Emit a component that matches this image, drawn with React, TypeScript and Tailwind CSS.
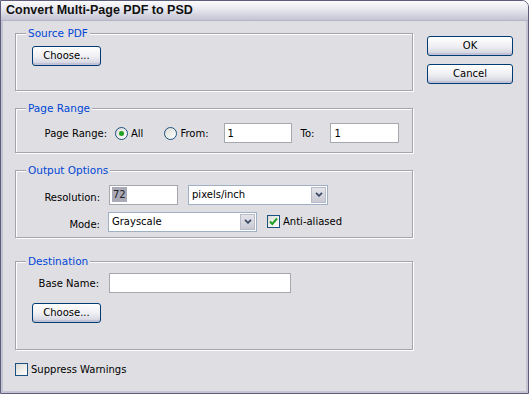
import React from "react";

function XpButton({ label, className = "" }: { label: string; className?: string }) {
  return (
    <button
      className={
        "h-[20px] rounded-[3px] border border-[#003c74] bg-gradient-to-b from-[#ffffff] via-[#f0f0f4] to-[#d0d0de] text-black shadow-[inset_0_-2px_0_#c2c2d6] leading-none " +
        className
      }
    >
      {label}
    </button>
  );
}

function Radio({ checked }: { checked?: boolean }) {
  return (
    <span className="flex items-center justify-center w-[13px] h-[13px] rounded-full border border-[#1c5180] bg-gradient-to-br from-[#dcdcd6] to-[#ffffff] flex-shrink-0">
      {checked && <span className="w-[5px] h-[5px] rounded-full bg-[#21a121]" />}
    </span>
  );
}

function Checkbox({ checked }: { checked?: boolean }) {
  return (
    <span className="flex items-center justify-center w-[13px] h-[13px] border border-[#1c5180] bg-gradient-to-br from-[#dcdcd6] to-[#ffffff] flex-shrink-0">
      {checked && (
        <svg width="11" height="11" viewBox="0 0 11 11" fill="none">
          <path d="M2 5.5L4.3 8L9 2.5" stroke="#21a121" strokeWidth="2" />
        </svg>
      )}
    </span>
  );
}

function TextBox({ value, className = "" }: { value?: string; className?: string }) {
  return (
    <div
      className={
        "h-[20px] border border-[#a5a9ae] bg-white flex items-center px-[3px] text-black " + className
      }
    >
      {value}
    </div>
  );
}

function Select({ value, className = "" }: { value: string; className?: string }) {
  return (
    <div className={"h-[20px] border border-[#a0b0c4] bg-white flex items-stretch " + className}>
      <div className="flex-1 flex items-center px-[2px] border border-white text-black">{value}</div>
      <div className="w-[15px] m-[1px] ml-0 bg-gradient-to-b from-[#e4e4ea] to-[#c9c9d4] border border-[#b8bcc8] flex items-center justify-center">
        <svg width="8" height="5" viewBox="0 0 8 5" fill="none">
          <path d="M1 0.8L4 3.8L7 0.8" stroke="#3d4a66" strokeWidth="1.8" />
        </svg>
      </div>
    </div>
  );
}

function Group({
  title,
  className = "",
  children,
}: {
  title: string;
  className?: string;
  children?: React.ReactNode;
}) {
  return (
    <div
      className={
        "relative w-[398px] border border-[#a4a4ac] shadow-[1px_1px_0_#ffffff,inset_1px_1px_0_#ffffff] " +
        className
      }
    >
      <span className="absolute left-[10px] -top-[8px] px-[2px] bg-[#dfdfe3] text-[#0046d5] text-[10.5px] leading-[14px]">
        {title}
      </span>
      {children}
    </div>
  );
}

export default function App() {
  return (
    <div className="w-[529px] h-[394px] bg-white font-['DejaVu_Sans',sans-serif] text-[10px] text-black select-none">
      <div className="w-full h-full flex flex-col rounded-tr-[7px] border border-[#5e5e7c] bg-[#dfdfe3] overflow-hidden">
        {/* Title bar */}
        <div className="h-[20px] flex items-center pl-[5px] bg-gradient-to-b from-[#fcfcfe] via-[#e4e4ec] to-[#c3c3d3] border-b border-[#b4b4c4] flex-shrink-0">
          <span className="font-['Liberation_Sans',sans-serif] font-bold text-[12.5px] text-[#111]">
            Convert Multi-Page PDF to PSD
          </span>
        </div>

        {/* Body */}
        <div className="flex-1 flex border-l-2 border-r-2 border-b-2 border-[#c4c4d2]">
          <div className="flex flex-col pl-[12px] pt-[12px]">
            <Group title="Source PDF" className="h-[58px] pl-[16px] pt-[12px]">
              <XpButton label="Choose..." className="w-[69px]" />
            </Group>

            <Group title="Page Range" className="mt-[17px] h-[45px] pt-[14px]">
              <div className="flex items-center">
                <span className="w-[91px] text-right">Page Range:</span>
                <span className="ml-[8px]">
                  <Radio checked />
                </span>
                <span className="ml-[3px]">All</span>
                <span className="ml-[21px]">
                  <Radio />
                </span>
                <span className="ml-[3px]">From:</span>
                <TextBox value="1" className="ml-[15px] w-[68px]" />
                <span className="ml-[9px]">To:</span>
                <TextBox value="1" className="ml-[16px] w-[69px]" />
              </div>
            </Group>

            <Group title="Output Options" className="mt-[17px] h-[68px] pt-[13px]">
              <div className="flex items-center">
                <span className="w-[84px] text-right pt-[6px]">Resolution:</span>
                <div className="ml-[9px] w-[69px] h-[20px] border border-[#a5a9ae] bg-white flex items-center px-[2px]">
                  <span className="bg-[#a9a9b8] text-[#222] px-[1px]">72</span>
                </div>
                <Select value="pixels/inch" className="ml-[10px] w-[140px]" />
              </div>
              <div className="flex items-center mt-[6px]">
                <span className="w-[84px] text-right pt-[6px]">Mode:</span>
                <Select value="Grayscale" className="ml-[8px] w-[149px]" />
                <span className="ml-[10px]">
                  <Checkbox checked />
                </span>
                <span className="ml-[3px]">Anti-aliased</span>
              </div>
            </Group>

            <Group title="Destination" className="mt-[23px] h-[89px] pt-[11px]">
              <div className="flex items-center">
                <span className="w-[83px] text-right">Base Name:</span>
                <TextBox className="ml-[10px] w-[182px]" />
              </div>
              <div className="pl-[16px] mt-[10px]">
                <XpButton label="Choose..." className="w-[69px]" />
              </div>
            </Group>

            <div className="flex items-center mt-[12px]">
              <Checkbox />
              <span className="ml-[3px]">Suppress Warnings</span>
            </div>
          </div>

          <div className="flex flex-col pl-[14px] pt-[15px] gap-[8px]">
            <XpButton label="OK" className="w-[86px]" />
            <XpButton label="Cancel" className="w-[86px]" />
          </div>
        </div>
      </div>
    </div>
  );
}
